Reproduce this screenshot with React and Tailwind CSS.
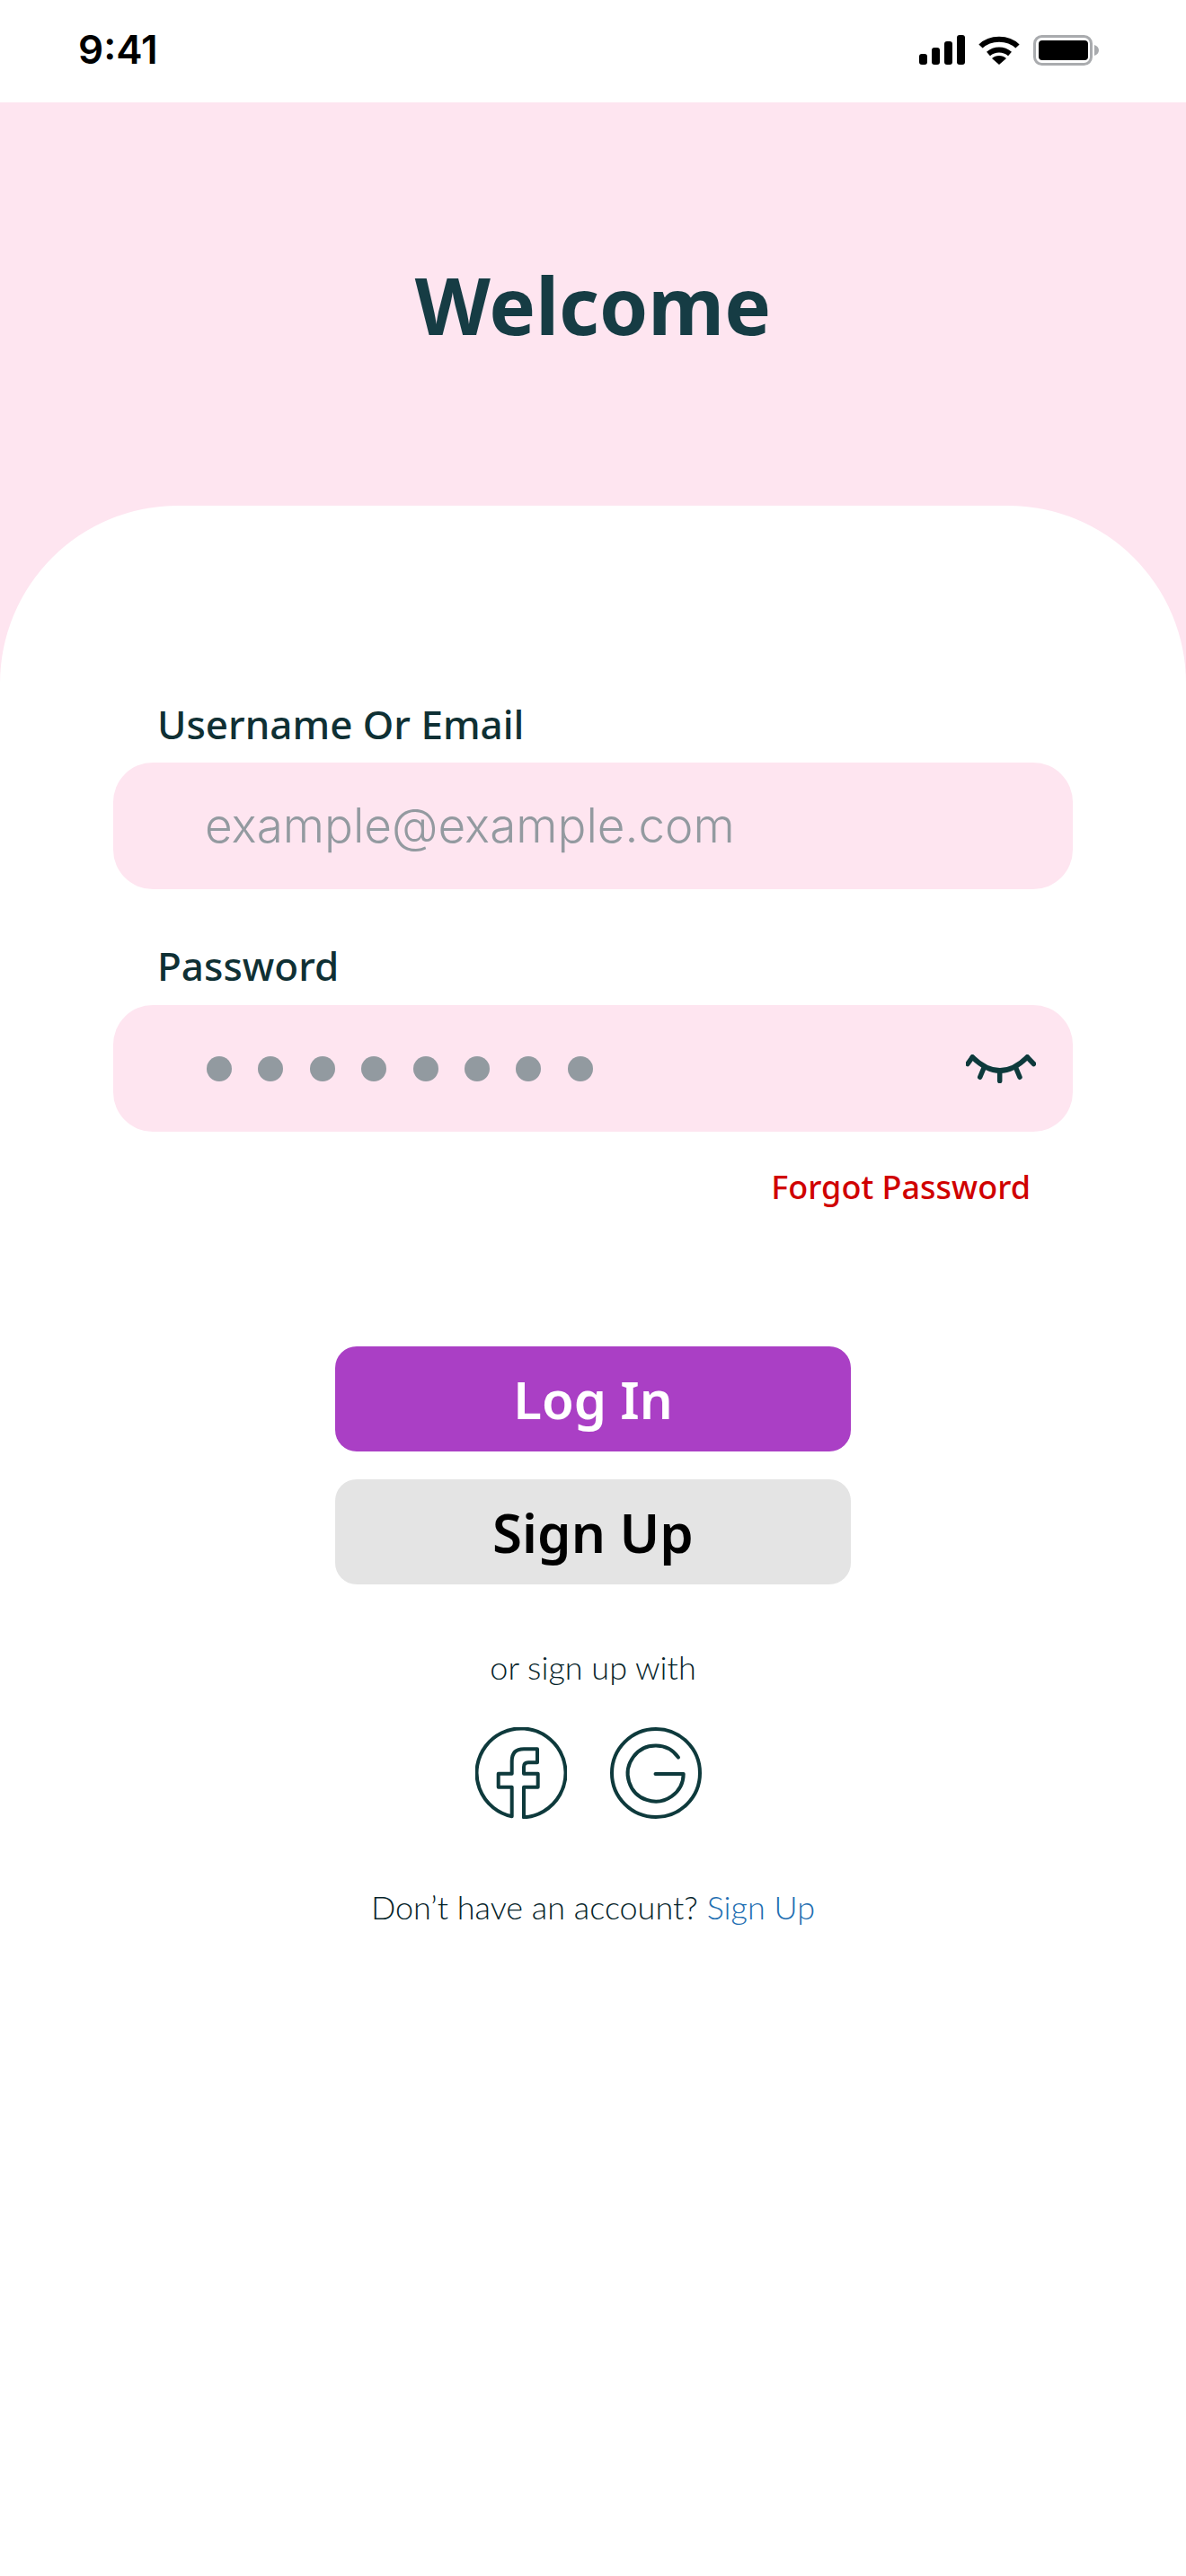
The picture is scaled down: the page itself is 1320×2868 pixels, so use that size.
const dark = "#0e3a3c";

function StatusBar() {
  return (
    <div className="h-[114px] bg-white flex justify-between pl-[87px] pr-[97px] pt-[30px]">
      <span className="font-['Inter',sans-serif] font-semibold text-[44px] leading-[50px] text-black">9:41</span>
      <div className="flex items-start gap-[15px] pt-[9px]">
        <svg width="51" height="33" viewBox="0 0 51 33" fill="black">
          <rect x="0" y="21" width="9" height="12" rx="3" />
          <rect x="14" y="14" width="9" height="19" rx="3" />
          <rect x="28" y="7" width="9" height="26" rx="3" />
          <rect x="42" y="0" width="9" height="33" rx="3" />
        </svg>
        <svg width="46" height="33" viewBox="0 0 46 33" fill="none" stroke="black" strokeWidth="6">
          <path d="M2.5 12.5C13 2 33 2 43.5 12.5" />
          <path d="M11 21c7-6 17-6 24 0" />
          <path d="M23 33l-8-7c4-4 12-4 16 0z" fill="black" stroke="none" />
        </svg>
        <svg width="73" height="34" viewBox="0 0 73 34" fill="none">
          <rect x="1.5" y="1.5" width="63" height="31" rx="8" stroke="#a9abae" strokeWidth="3" />
          <rect x="6" y="6" width="55" height="22" rx="4" fill="black" />
          <path d="M68 11c3 1 5 3 5 6s-2 5-5 6z" fill="#a9abae" />
        </svg>
      </div>
    </div>
  );
}

function EyeClosed() {
  return (
    <svg width="78" height="32" viewBox="0 0 78 32" fill="none" stroke={dark} strokeWidth="5.5" strokeLinecap="round">
      <path d="M7.3 3Q38 33 68.3 3" />
      <path d="M7.3 3L2 10.5M68.3 3L75.5 10.5M20 15L15.7 25.3M37.7 18.3V29.5M55.7 15L60 25.3" />
    </svg>
  );
}

function FacebookIcon() {
  return (
    <svg width="102" height="102" viewBox="0 0 102 102" fill="none" stroke={dark} strokeWidth="4" strokeLinejoin="round" strokeLinecap="round">
      <path d="M40.7 99.3A49.5 49.5 0 1 1 54 100.3V66.7H69.7V51.7H54V44.3Q54 39.3 59 39.3H69V24.3H54Q40.7 24.3 40.7 37.7V51.7H25.7V66.7H40.7Z" />
    </svg>
  );
}

function GoogleIcon() {
  return (
    <svg width="102" height="102" viewBox="0 0 102 102" fill="none" stroke={dark} strokeWidth="4" strokeLinecap="round" strokeLinejoin="round">
      <circle cx="51" cy="51" r="49" />
      <path d="M76 33.7A31 31 0 1 0 81.7 52H50.5" />
    </svg>
  );
}

function FieldLabel({ children }) {
  return <label className="block h-[60px] pl-[49px] text-[44px] leading-[60px] font-medium text-[#0f3034]">{children}</label>;
}

export default function App() {
  return (
    <div className="w-[1320px] h-[2868px] flex flex-col bg-white font-['Noto_Sans',sans-serif]">
      <StatusBar />
      <div className="flex-1 flex flex-col bg-[#fee5f0]">
        <div className="h-[449px] pt-[175px] text-center">
          <h1 className="text-[87px] leading-[100px] font-bold text-[#163c44]">Welcome</h1>
        </div>
        <div className="flex-1 bg-white rounded-t-[198px] pt-[213px] px-[126px]">
          <FieldLabel>Username Or Email</FieldLabel>
          <div className="mt-[13px] h-[141px] rounded-[44px] bg-[#fee5f0] flex items-center pl-[102px]">
            <span className="font-['Inter',sans-serif] font-light text-[53px] text-[#939aa0]">example@example.com</span>
          </div>
          <div className="mt-[55px]">
            <FieldLabel>Password</FieldLabel>
          </div>
          <div className="mt-[14px] h-[141px] rounded-[44px] bg-[#fee5f0] flex items-center justify-between pl-[104px] pr-[41px]">
            <div className="flex gap-[29.4px]">
              {[0, 1, 2, 3, 4, 5, 6, 7].map((i) => (
                <span key={i} className="w-[28px] h-[28px] rounded-full bg-[#929aa0]" />
              ))}
            </div>
            <EyeClosed />
          </div>
          <div className="mt-[37px] h-[50px] pr-[47px] text-right text-[36px] leading-[50px] font-medium text-[#d00000]">Forgot Password</div>

          <div className="mt-[152px] flex flex-col items-center gap-[31px]">
            <button className="w-[574px] h-[117px] rounded-[24px] bg-[#aa3fc5] text-white text-[58px] font-semibold">Log In</button>
            <button className="w-[574px] h-[117px] rounded-[24px] bg-[#e4e4e4] text-black text-[60px] font-semibold">Sign Up</button>
          </div>

          <p className="mt-[70px] h-[44px] text-center font-['Lato',sans-serif] font-light text-[36px] leading-[44px] text-[#06242a]">or sign up with</p>
          <div className="mt-[45px] pr-[10px] flex justify-center gap-[48px]">
            <FacebookIcon />
            <GoogleIcon />
          </div>
          <p className="mt-[76px] h-[44px] text-center font-['Lato',sans-serif] font-light text-[36px] leading-[44px] text-[#06242a]">
            Don’t have an account? <span className="text-[#1f6fb2]">Sign Up</span>
          </p>
        </div>
      </div>
    </div>
  );
}
